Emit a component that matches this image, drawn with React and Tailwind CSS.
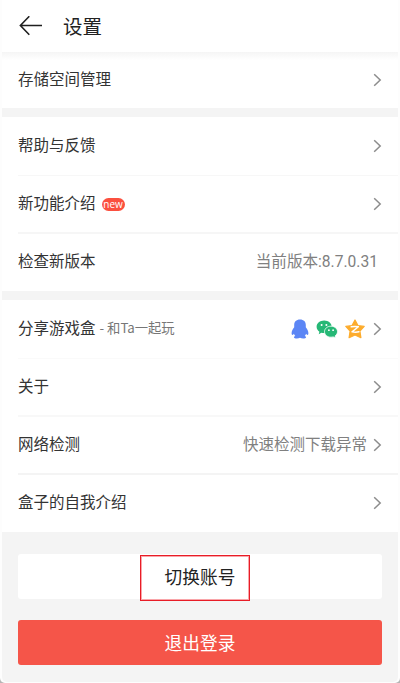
import React from 'react';

// Contact and share icons
const QQIcon = () => (
  <svg width="18" height="20" viewBox="0 0 18 20" className="block">
    <path
      fill="#5c86f5"
      d="M9 .4C5.200.4 3.200 2.700 3.200 5.900v2.300C1.600 10.200.6 12.200.6 14.200c0 1.200.5 1.900 1 1.700.5-.2 1-.8 1.300-1.200.3.9.8 1.700 1.400 2.300-.8.3-1.400.8-1.400 1.300 0 .9 1.500 1.200 3 1.200 1.200 0 2.300-.3 3.100-.8.800.5 1.900.8 3.100.8 1.500 0 3-.3 3-1.200 0-.5-.6-1-1.400-1.300.6-.6 1.100-1.400 1.400-2.300.3.4.8 1 1.300 1.200.5.2 1-.5 1-1.700 0-2-1-4-2.600-6V5.900C14.800 2.700 12.800.4 9 .4z"
    />
  </svg>
);

const WeChatIcon = () => (
  <svg width="22" height="18" viewBox="0 0 22 18" className="block">
    <path
      fill="#26b876"
      d="M8.200.5C3.900.5.6 3.300.6 6.800c0 2 1.100 3.700 2.800 4.900l-.7 2.500 2.700-1.500c.9.3 1.800.4 2.800.4 4.200 0 7.500-2.800 7.500-6.300S12.400.5 8.200.5z"
    />
    <circle cx="5.600" cy="4.900" r="1" fill="#fff" />
    <circle cx="10.400" cy="4.900" r="1" fill="#fff" />
    <path
      fill="#26b876"
      stroke="#fff"
      strokeWidth=".8"
      d="M15 6.200c-3.700 0-6.500 2.400-6.500 5.500s2.800 5.500 6.500 5.500c.8 0 1.600-.1 2.300-.3l2.300 1-.5-2c1.500-1 2.400-2.500 2.400-4.200 0-3.100-2.900-5.500-6.500-5.500z"
    />
    <circle cx="12.900" cy="10.200" r=".9" fill="#fff" />
    <circle cx="17.100" cy="10.200" r=".9" fill="#fff" />
  </svg>
);

const QzoneIcon = () => (
  <svg width="20" height="20" viewBox="0 0 20 20" className="block">
    <path
      fill="#fdac2d"
      stroke="#fdac2d"
      strokeWidth="1.200"
      strokeLinejoin="round"
      d="M10 1l3 5.500 6.200.9-4.300 4.600 1 6.700-5.900-2.700-5.900 2.700 1-6.700L.8 7.400 7 6.500z"
    />
    <path
      fill="none"
      stroke="#fff"
      strokeWidth="1.400"
      strokeLinejoin="round"
      strokeLinecap="round"
      d="M6.200 7.800c2.400-.3 4.800-.3 7.200 0L7 12.900c2.500.5 4.800.5 7-.1"
    />
  </svg>
);

const Chevron = () => (
  <svg width="9" height="14" viewBox="0 0 9 14" className="block" fill="none">
    <path d="M1.200 1.200L7.200 7 1.200 12.800" stroke="#8c8c8c" strokeWidth="1.500" />
  </svg>
);

const BackArrow = () => (
  <svg width="24" height="20" viewBox="0 0 24 20" className="block" fill="none">
    <path
      d="M23 9.500H1.400M10.300.3L1.400 9.500l8.900 9.200"
      stroke="#1f1f1f"
      strokeWidth="1.600"
    />
  </svg>
);

const Row = ({ label, extra, children, arrow = true, className = '' }) => (
  <div className="pl-4">
    <div className={`flex items-center pr-4 ${className}`}>
      <span className="text-[15.5px] leading-6 text-[#333]">{label}</span>
      {extra}
      <div className="ml-auto flex items-center">
        {children}
        {arrow && <Chevron />}
      </div>
    </div>
  </div>
);

const Band = () => <div className="h-[9px] bg-[#f4f4f4]" />;

export default function App() {
  return (
    <div className="h-[683px] w-[400px] overflow-hidden bg-[#b5b5b5] font-['Roboto','Noto_Sans_CJK_SC',sans-serif] whitespace-nowrap">
      <div className="flex h-[683px] flex-col rounded-b-[5px] bg-[#fdfdfd] px-0.5">
        {/* Header */}
        <header className="flex h-[52px] shrink-0 items-center bg-white pl-[17px]">
          <BackArrow />
          <h1 className="ml-5 pt-[3px] text-[19.5px] leading-7 text-[#222]">设置</h1>
        </header>

        <main className="bg-white">
          <div className="h-2 bg-linear-to-b from-[#f5f5f5] to-white" />
          <Row label="存储空间管理" className="h-12 pb-[9px]" />
          <Band />

          <Row label="帮助与反馈" className="h-[59px] border-b border-[#f7f7f7]" />
          <Row
            label="新功能介绍"
            className="h-[58px] border-b-2 border-[#f6f6f6]"
            extra={
              <span className="ml-1.5 flex h-[13px] w-[23px] items-center justify-center rounded-full bg-[#fb503f] pb-px font-['Open_Sans',sans-serif] text-[10px] leading-none text-white">
                new
              </span>
            }
          />
          <Row label="检查新版本" arrow={false} className="h-[57px] pb-px">
            <span className="mr-1 pt-px text-[15.6px] text-[#808080]">当前版本:8.7.0.31</span>
          </Row>
          <Band />

          <Row
            label="分享游戏盒"
            className="h-[59px] border-b border-[#fafafa] pb-px"
            extra={
              <span className="ml-1 pb-0.5 font-['Noto_Sans_CJK_SC',sans-serif] text-[13.3px] leading-5 text-[#777]">
                - 和Ta一起玩
              </span>
            }
          >
            <div className="mr-2 flex items-center gap-[7px]">
              <QQIcon />
              <WeChatIcon />
              <QzoneIcon />
            </div>
          </Row>
          <Row label="关于" className="h-[58px] border-b-2 border-[#f8f8f8]" />
          <Row label="网络检测" className="h-[58px] border-b-2 border-[#f4f4f4]">
            <span className="mr-1.5 pt-px text-[15.5px] text-[#808080]">快速检测下载异常</span>
          </Row>
          <Row label="盒子的自我介绍" className="h-[57px] pb-px" />
        </main>

        {/* Account actions */}
        <footer className="flex h-[150px] shrink-0 flex-col gap-[21px] rounded-b-[5px] bg-[#f4f4f4] px-4 pt-[22px]">
          <button className="relative h-[45px] rounded-[3px] bg-white pt-[3px] text-[17.7px] text-[#222]">
            切换账号
            <span className="absolute top-px left-[122px] h-[46px] w-[110px] border border-[#e81c26] shadow-[inset_0_0_0_1px_#f9a5a9]" />
          </button>
          <button className="h-[45px] rounded-[3px] bg-[#f55549] pt-[3px] text-[17.7px] text-white">
            退出登录
          </button>
        </footer>
      </div>
    </div>
  );
}
